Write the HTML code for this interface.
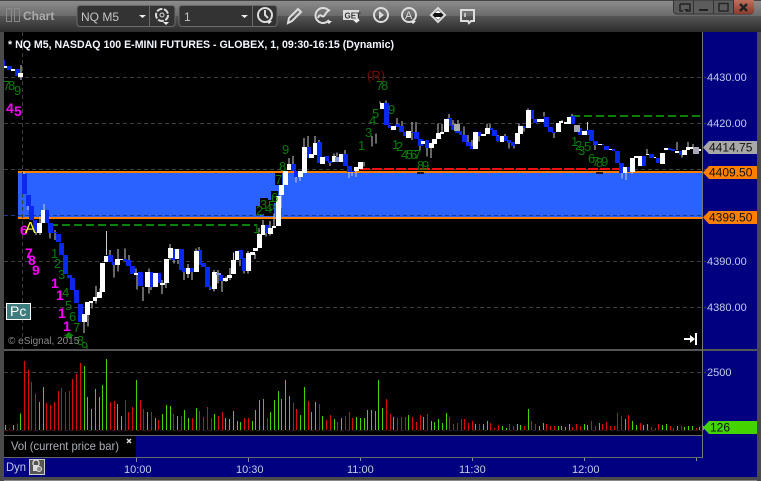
<!DOCTYPE html>
<html><head><meta charset="utf-8"><style>
html,body{margin:0;padding:0;background:#444;width:761px;height:481px;overflow:hidden}
svg{display:block}
text{font-family:"Liberation Sans",sans-serif}
.g{fill:#0b7d0b;font-size:13px}
.m{fill:#ff00ff;font-size:14px;font-weight:bold}
.a{fill:#c4cbe6;font-size:11px}
.t{fill:#111;font-size:12px}
.i{fill:none;stroke:#ddd;stroke-width:2}
</style></head><body>
<svg width="761" height="481" viewBox="0 0 761 481" xmlns="http://www.w3.org/2000/svg">
<defs>
<linearGradient id="t1" x1="0" y1="0" x2="0" y2="1"><stop offset="0" stop-color="#8c8c8c"/><stop offset="1" stop-color="#6a6a6a"/></linearGradient>
<linearGradient id="t2" x1="0" y1="0" x2="0" y2="1"><stop offset="0" stop-color="#555"/><stop offset="1" stop-color="#2c2c2c"/></linearGradient>
<linearGradient id="rd" x1="0" y1="0" x2="0" y2="1"><stop offset="0" stop-color="#c0705c"/><stop offset="1" stop-color="#8c3a2c"/></linearGradient>
</defs>
<rect width="761" height="481" fill="#4a4a4a"/>
<rect y="0" width="761" height="1" fill="#444"/>
<rect y="1" width="761" height="15" fill="url(#t1)"/>
<rect y="16" width="761" height="16" fill="url(#t2)"/>
<rect x="4" y="32" width="753" height="445" fill="#000"/>
<rect x="703" y="32" width="54" height="445" fill="#000080"/>
<rect x="136" y="436" width="567" height="22" fill="#000080"/>
<rect x="4" y="458" width="699" height="19" fill="#000080"/>

<!-- toolbar -->
<rect x="6.5" y="8.5" width="5" height="13" fill="none" stroke="#8a8a8a"/><rect x="14.5" y="8.5" width="5" height="13" fill="none" stroke="#8a8a8a"/>
<text x="23" y="20" font-size="12" font-weight="bold" fill="#aaa">Chart</text>
<rect x="77" y="5.5" width="98" height="21" rx="3" fill="#333" stroke="#6a6a6a"/><line x1="149.500" y1="6" x2="149.500" y2="26" stroke="#6a6a6a"/>
<rect x="179" y="5.5" width="98" height="21" rx="3" fill="#333" stroke="#6a6a6a"/><line x1="252.500" y1="6" x2="252.500" y2="26" stroke="#6a6a6a"/>
<text x="81" y="21" font-size="12" fill="#c4c4c4">NQ M5</text>
<text x="184" y="21" font-size="12" fill="#c4c4c4">1</text>
<path d="M139 15h7l-3.500 3zM241 15h7l-3.500 3zM163 22h6l-3 3zM266 21h6l-3 3zM326 21h6l-3 3zM353 20h7l-3.500 3zM410 21h6l-3 3z" fill="#eee"/>
<circle cx="162" cy="15" r="6" class="i" stroke-dasharray="6 1.500" stroke-width="3"/><circle cx="162" cy="15" r="2" fill="none" stroke="#ddd"/>
<circle cx="265" cy="15" r="7" class="i"/><path d="M265 10v5l3 3" class="i" stroke-width="1.500"/>
<path d="M288 23l1-5 9-9 3 3-9 9z" class="i" stroke-width="1.500"/>
<path d="M329 11a7.500 7.500 0 1 0 0 9" class="i"/><path d="M318 18c2-6 4 0 6-2s2-5 6-6" class="i" stroke-width="1.500"/>
<rect x="343" y="10" width="16" height="10" fill="#ddd"/><text x="344.500" y="18.500" font-size="8" font-weight="bold" fill="#333">GET</text>
<circle cx="381" cy="15" r="7" class="i"/><path d="M379 11l5 4-5 4z" fill="#ddd"/>
<circle cx="409" cy="15" r="7" class="i"/><text x="405" y="19" font-size="11" fill="#ddd">A</text>
<path d="M431 15l7-7 7 7-7 7z" fill="#111" stroke="#ddd" stroke-width="2"/><path d="M435 13l3-3 3 3zM435 17h6l-3 3z" fill="#fff"/>
<path d="M461 10h13v11h-3l-2 2-1-2h-7z" class="i" stroke-width="1.800"/><path d="M465 13v4" stroke="#ddd" stroke-width="1.500"/>

<!-- window controls -->
<path d="M673.500 0v10q0 4 4 4h72q4 0 4-4V0z" fill="#5c5c5c" stroke="#333"/>
<path d="M734 0h20v10q0 4-4 4h-16z" fill="url(#rd)"/>
<path d="M693.500 0v14M713.500 0v14M733.500 0v14" stroke="#333"/>
<path d="M680 4h10v7h-4M680 4v7h3" fill="none" stroke="#222" stroke-width="1.500"/><path d="M684 9h5l-2.500 3z" fill="#222"/>
<rect x="699" y="9" width="9" height="2" fill="#222"/>
<rect x="719" y="3.500" width="9" height="7.500" fill="none" stroke="#222" stroke-width="1.400"/>
<path d="M740 4l7 7M747 4l-7 7" stroke="#222" stroke-width="2.500"/>

<!-- zone -->
<rect x="18" y="173" width="685" height="44" fill="#2962ff"/>
<rect x="18" y="171" width="685" height="2" fill="#ff8000"/>
<rect x="18" y="217" width="685" height="2" fill="#ff8000"/>

<!-- grid -->
<g stroke="#3e3e3e" stroke-dasharray="4 3" shape-rendering="crispEdges">
<path d="M4 77.500H706M4 123.500H706M4 169.500H706M4 261.500H706M4 307.500H706"/>
<path d="M4 215.500H706" stroke="#123a99"/>
<path d="M4 372.500H706"/>
<path d="M22.500 32V350"/>
</g>
<path d="M4 430.500H703" stroke="#331a1a" stroke-dasharray="4 2" shape-rendering="crispEdges"/>
<path d="M50 225H256" stroke="#0a800a" stroke-width="2" stroke-dasharray="8 4" shape-rendering="crispEdges"/>
<path d="M572 116H703" stroke="#0a800a" stroke-width="2" stroke-dasharray="8 4" shape-rendering="crispEdges"/>
<path d="M360 169H620" stroke="#ee1111" stroke-width="2" stroke-dasharray="10 2" shape-rendering="crispEdges"/>
<path d="M417 173h7M596 173h7" stroke="#000" stroke-width="1.500"/>

<!-- black digit backgrounds -->
<path d="M275 173h7v12h-7zM271 191h7v12h-7zM260 198h8v16h-8zM256 206h7v9h-7zM264 200h10v16h-10z" fill="#000"/>

<!-- candles group: top-left -->
<g transform="scale(.33333)" shape-rendering="crispEdges">
<path d="M63 195V240" stroke="#ddd" stroke-width="3"/>
<path d="M9 180h6v24h-6zM21 198h15v12h-15zM45 207h15v21h-15z" fill="#0a28ee"/>
<path d="M12 198h9v6h-9zM33 207h12v6h-12zM54 219h15v12h-15z" fill="#fff"/>
</g>
<!-- zoom 4 region: origin 0,160 -->
<g transform="translate(0,160) scale(.33333)" shape-rendering="crispEdges">
<path d="M72 36V45M84 138V150M108 180V225M120 170V225M132 132V150M150 219V235M165 210V240M319 213V285M330 270V285M342 315V352M354 267V297M354 315V335M375 265V297M387 285V300M408 325V340M411 345V388M429 381V423M447 325V337M447 381V400M252 486V519M264 465V500M276 426V445M288 378V430M300 385V396" stroke="#ccc" stroke-width="3"/>
<path d="M66 42h15v60h-15zM78 105h15v33h-15zM87 138h15v42h-15zM99 180h12v36h-12zM132 150h15v39h-15zM144 189h15v30h-15zM156 216h15v3h-15zM168 222h15v24h-15zM177 249h15v36h-15zM189 285h15v57h-15zM201 345h15v9h-15zM210 354h15v36h-15zM222 390h15v39h-15zM234 432h15v54h-15zM324 285h15v21h-15zM336 306h12v9h-12zM369 297h12v6h-12zM378 300h15v18h-15zM390 318h15v24h-15zM414 336h15v42h-15z" fill="#0a28ee"/>
<path d="M111 189h15v30h-15zM123 150h12v39h-12zM246 462h15v24h-15zM255 426h15v39h-15zM267 423h12v6h-12zM279 411h12v12h-12zM291 396h15v18h-15zM300 309h15v87h-15zM312 288h12v18h-12zM345 297h15v18h-15zM357 297h12v3h-12zM402 339h12v6h-12zM435 336h15v45h-15z" fill="#fff"/>
</g>
<!-- zoom 5 region: origin 150,130 -->
<g transform="translate(150,130) scale(.33333)" shape-rendering="crispEdges">
<path d="M3 426V480M36 450V492M48 459V474M60 342V390M72 385V400M84 390V402M102 420V450M114 402V444M126 420V450M138 355V420M147 351V363M180 470V480M192 420V485M204 420V460M216 450V486M228 440V456M240 414V450M250 368V392M270 388V408M282 420V430M294 363V430M315 370V387M327 294V320M339 270V290M348 305V320M360 273V316M372 250V290M393 195V234M417 84V120M429 78V105M438 140V158M450 140V153M462 24V55M474 18V55M495 18V42M507 30V40M540 95V108M552 70V80M561 68V80M585 60V75M597 125V144M606 125V138M618 122V141M642 96V110" stroke="#ccc" stroke-width="3"/>
<path d="M0 426h9v45h-9zM18 429h15v30h-15zM63 357h12v33h-12zM87 357h15v63h-15zM96 414h12v12h-12zM120 414h12v12h-12zM141 360h15v45h-15zM153 399h15v12h-15zM165 411h15v60h-15zM177 471h9v6h-9zM207 435h12v18h-12zM264 360h15v27h-15zM276 384h12v39h-12zM345 285h12v24h-12zM423 102h15v21h-15zM432 123h12v18h-12zM468 51h15v33h-15zM501 36h15v63h-15zM522 78h15v15h-15zM534 93h12v6h-12zM579 72h15v36h-15zM591 108h15v18h-15zM603 123h12v3h-12z" fill="#0a28ee"/>
<path d="M9 429h15v42h-15zM30 459h15v6h-15zM42 387h15v72h-15zM54 354h15v30h-15zM75 357h12v30h-12zM108 414h12v18h-12zM132 363h15v63h-15zM186 426h15v51h-15zM219 444h15v9h-15zM231 435h15v9h-15zM243 390h15v42h-15zM255 363h12v27h-12zM288 369h15v54h-15zM300 366h15v9h-15zM309 354h15v9h-15zM321 312h15v42h-15zM333 285h12v30h-12zM354 294h15v18h-15zM366 288h12v6h-12zM378 198h15v90h-15zM387 165h15v30h-15zM399 123h15v42h-15zM411 102h12v18h-12zM444 123h15v18h-15zM456 51h15v78h-15zM477 72h15v12h-15zM489 39h12v36h-12zM510 81h15v21h-15zM546 78h12v18h-12zM567 72h12v24h-12zM612 111h15v12h-15zM624 96h15v21h-15z" fill="#fff"/>
<path d="M198 429h15v6h-15zM555 81h12v15h-12z" fill="#8a98e0"/>
</g>
<!-- zoom 6 region: origin 340,60 -->
<g transform="translate(340,60) scale(.33333)" shape-rendering="crispEdges">
<path d="M96 228V260M108 220V250M120 125V130M138 122V130M171 174V195M186 183V200M216 186V240M228 186V216M240 255V272M261 262V290M273 262V294M294 190V220M306 192V220M327 162V175M339 180V195M354 180V192M372 200V225M384 225V255M396 240V260M417 225V245M441 192V205M450 192V205M474 225V245M495 222V232M507 245V265M522 255V265M537 190V200M552 200V215M564 145V150" stroke="#ccc" stroke-width="3"/>
<path d="M132 129h15v66h-15zM144 195h9v9h-9zM165 192h15v9h-15zM177 198h15v18h-15zM189 216h12v12h-12zM210 216h12v3h-12zM222 216h15v21h-15zM234 237h15v21h-15zM255 240h12v24h-12zM321 174h15v24h-15zM333 195h12v15h-12zM345 210h15v9h-15zM357 213h9v12h-9zM366 225h15v21h-15zM378 246h15v12h-15zM390 258h9v9h-9zM411 216h12v12h-12zM444 204h15v6h-15zM456 210h15v18h-15zM468 228h12v15h-12zM489 228h15v15h-15zM501 240h12v9h-12zM513 246h12v12h-12zM546 198h12v6h-12zM567 150h15v27h-15zM579 177h12v12h-12z" fill="#0a28ee"/>
<path d="M120 129h12v18h-12zM153 198h15v12h-15zM198 213h15v21h-15zM243 243h12v9h-12zM267 249h15v15h-15zM276 237h15v15h-15zM288 219h15v18h-15zM300 216h12v6h-12zM312 177h15v39h-15zM399 216h15v51h-15zM423 222h15v6h-15zM435 204h15v18h-15zM480 228h12v18h-12zM525 219h15v33h-15zM534 198h15v24h-15zM558 150h15v54h-15zM591 177h9v9h-9z" fill="#fff"/>
<path d="M342 192h18v21h-18z" fill="#aaa"/>
</g>
<!-- zoom 7 region: origin 540,100 -->
<g transform="translate(540,100) scale(.33333)" shape-rendering="crispEdges">
<path d="M12 36V50M42 96V114M66 60V66M96 42V48M142 66V92M165 135V150M246 219V235M258 216V240M276 216V222M321 147V165M411 126V150M426 165V172M444 126V142M459 132V145" stroke="#ccc" stroke-width="3"/>
<path d="M12 51h15v30h-15zM24 81h15v15h-15zM36 96h12v3h-12zM90 48h15v24h-15zM114 84h12v21h-12zM135 90h12v15h-12zM147 90h15v33h-15zM159 123h15v12h-15zM183 132h9v3h-9zM192 138h15v12h-15zM216 147h9v6h-9zM225 153h15v36h-15zM237 189h15v30h-15zM258 201h12v15h-12zM303 168h15v30h-15zM327 162h15v12h-15zM348 174h12v15h-12zM384 144h9v6h-9zM393 147h12v6h-12zM417 153h9v12h-9z" fill="#0a28ee"/>
<path d="M0 57h12v9h-12zM48 69h15v27h-15zM57 63h12v6h-12zM72 66h12v6h-12zM81 51h12v21h-12zM126 93h15v12h-15zM174 132h12v3h-12zM207 147h9v3h-9zM249 201h12v18h-12zM270 174h15v42h-15zM282 168h12v6h-12zM294 168h12v30h-12zM318 162h9v3h-9zM342 171h6v3h-6zM360 159h15v33h-15zM372 144h12v6h-12zM405 153h12v6h-12zM426 150h15v15h-15zM438 141h12v9h-12zM450 141h9v6h-9zM471 147h12v6h-12z" fill="#fff"/>
<path d="M102 75h18v21h-18zM459 141h18v21h-18z" fill="#a8a8b4"/>
</g>

<!-- title -->
<text x="8" y="48" font-size="11" font-weight="bold" fill="#f2f6ff" textLength="386" lengthAdjust="spacingAndGlyphs">* NQ M5, NASDAQ 100 E-MINI FUTURES - GLOBEX, 1, 09:30-16:15 (Dynamic)</text>

<!-- green digits -->
<g class="g">
<text x="3" y="90" class="g">7</text><text x="8" y="90" class="g">8</text><text x="14" y="95" class="g">9</text>
<text x="51" y="258" class="g">1</text><text x="54" y="268" class="g">2</text><text x="58" y="279" class="g">3</text><text x="62" y="297" class="g">4</text><text x="65" y="310" class="g">5</text><text x="69" y="321" class="g">6</text><text x="73" y="332" class="g">7</text><text x="77" y="345" class="g">8</text><text x="81" y="351" class="g">9</text>
<text x="253" y="233" class="g">1</text><text x="256" y="215" class="g">2</text><text x="260" y="209" class="g">3</text><text x="265" y="213" class="g">4</text><text x="268" y="210" class="g">5</text><text x="271" y="202" class="g">6</text><text x="275" y="184" class="g">7</text><text x="279" y="171" class="g">8</text><text x="282" y="154" class="g">9</text>
<text x="358" y="150" class="g">1</text><text x="365" y="137" class="g">3</text><text x="369" y="125" class="g">4</text><text x="372" y="118" class="g">5</text><text x="376" y="90" class="g">7</text><text x="381" y="90" class="g">8</text><text x="388" y="114" class="g">9</text>
<text x="392" y="149" class="g">1</text><text x="396" y="151" class="g">2</text><text x="401" y="159" class="g">4</text><text x="406" y="159" class="g">5</text><text x="410" y="159" class="g">6</text><text x="414" y="159" class="g">7</text><text x="417" y="170" class="g">8</text><text x="422" y="170" class="g">9</text>
<text x="571" y="146" class="g">1</text><text x="575" y="150" class="g">2</text><text x="578" y="155" class="g">3</text><text x="584" y="151" class="g">5</text><text x="588" y="163" class="g">6</text><text x="592" y="166" class="g">7</text><text x="596" y="167" class="g">8</text><text x="601" y="166" class="g">9</text>
</g>
<path d="M66 338h6v-2h2l-5-4-5 4h2z" fill="#0b7d0b"/>

<!-- magenta digits -->
<text x="6" y="113" class="m">4</text><text x="14" y="116" class="m">5</text>
<text x="20" y="235" class="m">6</text>
<text x="25" y="258" class="m">7</text><text x="28" y="265" class="m">8</text><text x="32" y="275" class="m">9</text>
<text x="51" y="288" class="m">1</text><text x="56" y="300" class="m">1</text><text x="58" y="318" class="m">1</text><text x="63" y="331" class="m">1</text>
<text x="25" y="233" font-size="16" fill="#ffff20">A</text>
<text x="367" y="80" font-size="13" fill="#7a0a0a">(R)</text>

<!-- Pc, copyright, arrow -->
<rect x="6.500" y="303.500" width="24" height="16" fill="#3f7c80" stroke="#fff"/>
<text x="10" y="316" font-size="14" fill="#fff">Pc</text>
<text x="8" y="344" font-size="10" fill="#8a8a8a">© eSignal, 2015</text>
<path d="M684 338h6v-3l5 4-5 4v-3h-6z" fill="#fff"/><rect x="695" y="333" width="2" height="12" fill="#fff"/>

<!-- separators -->
<rect x="0" y="349" width="757" height="2" fill="#555"/>
<rect x="0" y="435" width="703" height="1" fill="#666"/>
<rect x="4" y="457" width="699" height="1" fill="#666"/>
<rect x="702" y="32" width="1" height="426" fill="#777"/>

<!-- volume: zoom 8 -->
<g transform="translate(0,340) scale(.33333)" shape-rendering="crispEdges" stroke-width="3">
<path stroke="#44d400" d="M16 255V270M40 255V270M61 220V270M118 186V270M130 141V270M253 78V270M262 171V270M274 207V270M286 147V270M298 171V270M307 135V270M319 57V270M352 192V270M364 228V270M409 120V270M442 216V270M466 234V270M487 222V270M499 195V270M511 198V270M532 228V270M553 210V270M565 234V270M589 204V270M643 222V270M676 234V270M688 237V270M700 213V270M712 243V270M721 246V270"/>
<path stroke="#dd0a0a" d="M28 265V270M52 250V270M73 63V270M85 88V270M94 126V270M106 160V270M139 189V270M151 195V270M163 186V270M175 153V270M184 144V270M196 156V270M208 153V270M217 117V270M229 102V270M241 69V270M331 186V270M343 183V270M376 180V270M385 216V270M397 201V270M421 180V270M430 207V270M454 216V270M475 240V270M520 222V270M544 228V270M577 234V270M598 213V270M610 231V270M622 201V270M634 234V270M655 228V270M667 216V270M733 234V270M745 234V270"/>
</g>
<!-- volume: zoom 9 -->
<g transform="translate(250,340) scale(.33333)" shape-rendering="crispEdges" stroke-width="3">
<path stroke="#44d400" d="M7 243V270M16 210V270M28 180V270M40 177V270M61 216V270M73 180V270M85 153V270M94 177V270M106 120V270M118 168V270M151 225V270M163 141V270M184 216V270M196 186V270M217 228V270M253 237V270M274 234V270M319 231V270M331 234V270M343 234V270M352 210V270M364 210V270M376 213V270M385 120V270M397 204V270M430 231V270M475 225V270M520 231V270M544 243V270M553 246V270M565 237V270M577 249V270M589 219V270M676 252V270M700 252V270M712 243V270M757 258V270M769 264V270"/>
<path stroke="#dd0a0a" d="M52 234V270M130 189V270M139 207V270M175 183V270M208 192V270M229 240V270M241 225V270M262 246V270M286 228V270M298 216V270M307 234V270M409 177V270M421 222V270M442 234V270M454 231V270M466 231V270M487 231V270M499 246V270M511 225V270M532 222V270M598 231V270M610 252V270M622 249V270M634 237V270M643 237V270M655 249V270M667 243V270M688 252V270M721 249V270M733 264V270M745 255V270M778 252V270"/>
</g>
<!-- volume: zoom 10 -->
<g transform="translate(510,340) scale(.33333)" shape-rendering="crispEdges" stroke-width="3">
<path stroke="#44d400" d="M22 252V270M31 255V270M55 207V270M88 258V270M100 249V270M145 258V270M154 258V270M166 261V270M178 252V270M223 252V270M232 255V270M268 249V270M346 237V270M367 243V270M379 255V270M400 255V270M412 252V270M457 255V270M469 252V270M502 258V270M523 261V270M535 258V270M547 258V270M568 261V270M580 258V270"/>
<path stroke="#dd0a0a" d="M10 258V270M43 258V270M64 243V270M76 252V270M109 252V270M121 258V270M133 258V270M187 261V270M199 252V270M211 258V270M244 243V270M256 258V270M277 252V270M289 246V270M301 258V270M313 258V270M322 219V270M334 228V270M355 225V270M391 249V270M424 261V270M436 264V270M445 252V270M481 258V270M490 264V270M514 258V270M559 264V270"/>
</g>

<!-- vol label -->
<text x="11" y="450" font-size="12" fill="#aab0b8" textLength="108" lengthAdjust="spacingAndGlyphs">Vol (current price bar)</text>
<path d="M127 439l4 4M131 439l-4 4" stroke="#ddd" stroke-width="1.500"/>

<!-- axis -->
<text x="6" y="471" font-size="12" fill="#c4cce8" textLength="20" lengthAdjust="spacingAndGlyphs">Dyn</text>
<rect x="29.500" y="459.500" width="15" height="15" fill="#555" stroke="#ccc"/>
<path d="M33 465v-2a3 3 0 0 1 6 0v2" fill="none" stroke="#ddd" stroke-width="1.300"/><rect x="33" y="465" width="6" height="6" fill="#ddd"/><circle cx="39" cy="469" r="2.500" fill="#888" stroke="#ddd"/>
<path d="M136.500 458v4M248.500 458v4M360.500 458v3M472.500 458v3M584.500 458v3M696.500 458v3" stroke="#8888aa"/>
<g class="a">
<text x="124" y="473" class="a">10:00</text><text x="236" y="473" class="a">10:30</text><text x="347" y="473" class="a">11:00</text><text x="459" y="473" class="a">11:30</text><text x="572" y="473" class="a">12:00</text>
<text x="707" y="81" class="a">4430.00</text><text x="707" y="127" class="a">4420.00</text><text x="707" y="265" class="a">4390.00</text><text x="707" y="311" class="a">4380.00</text><text x="707" y="376" class="a">2500</text>
</g>

<!-- price tags -->
<path d="M703 147.500l6-6.500h48v13h-48z" fill="#a8a8a8"/><text x="709" y="151.500" class="t">4414.75</text>
<path d="M703 172.500l6-6.500h48v13h-48z" fill="#ff8000"/><text x="709" y="176.500" class="t">4409.50</text>
<path d="M703 217.500l6-6.500h48v13h-48z" fill="#ff8000"/><text x="709" y="221.500" class="t">4399.50</text>
<path d="M703 427.500l6-6.500h48v13h-48z" fill="#44d400"/><text x="710" y="431.500" class="t">126</text>

<!-- outer border -->
<rect x="0" y="477" width="761" height="4" fill="#4a4a4a"/><rect x="0" y="480" width="761" height="1" fill="#888"/>
<rect x="0" y="32" width="4" height="449" fill="#4a4a4a"/>
<rect x="757" y="32" width="4" height="449" fill="#4a4a4a"/>
</svg>
</body></html>
